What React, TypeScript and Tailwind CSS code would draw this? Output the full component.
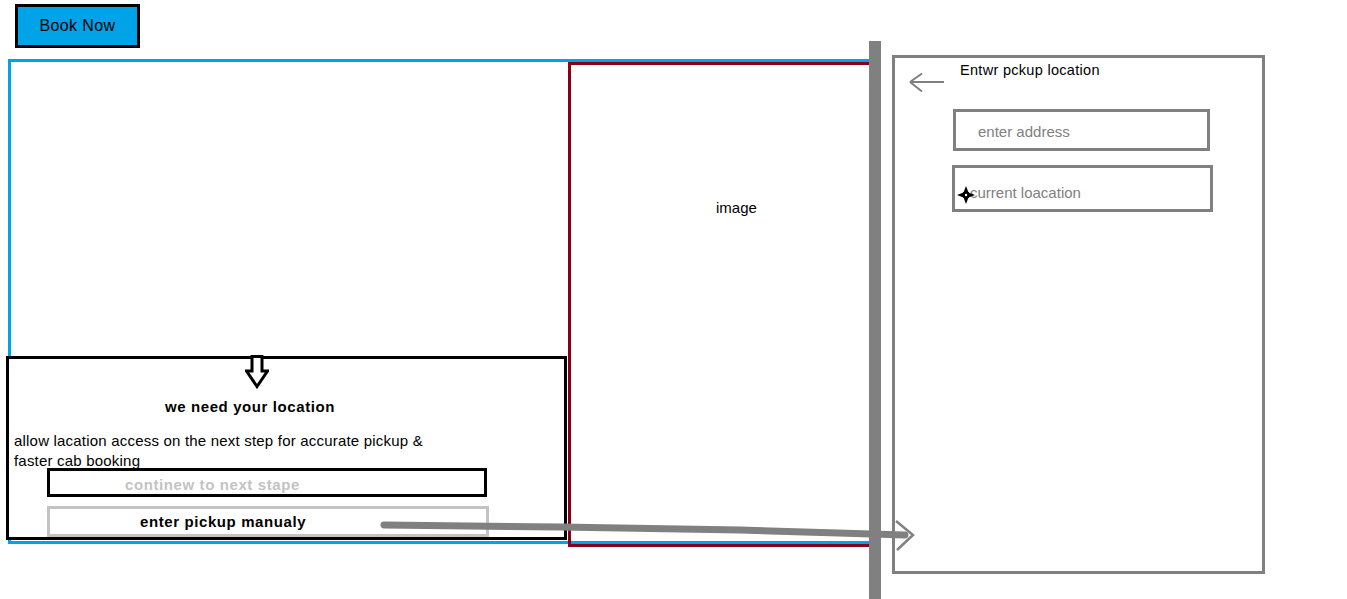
import React from 'react';

const DownArrow = () => (
  <svg width="24" height="34" viewBox="0 0 24 34" className="block">
    <path d="M7 1.5H17V16H22.5L12 31.5L1.5 16H7Z" fill="white" stroke="black" strokeWidth={3} strokeLinejoin="miter" />
  </svg>
);

const BackArrow = () => (
  <svg width="36" height="22" viewBox="0 0 36 22" className="block">
    <path d="M1 10H35M1 10L13 1.5M1 10L13 19.5" fill="none" stroke="#808080" strokeWidth={2} />
  </svg>
);

const Crosshair = () => (
  <svg width="18" height="18" viewBox="0 0 18 18" className="block">
    <path d="M9 0L11.5 6.5L18 9L11.5 11.5L9 18L6.5 11.5L0 9L6.5 6.5Z" fill="black" />
    <rect x="6" y="6" width="6" height="6" fill="black" />
    <circle cx="9" cy="9" r="1.2" fill="white" />
  </svg>
);

const App = () => {
  return (
    <div className="relative flex w-[1347px] h-[599px] overflow-hidden bg-white text-black font-['Liberation_Sans',Arial,sans-serif]">
      {/* left: booking screen */}
      <div className="flex flex-col w-[869px] shrink-0">
        <div className="pl-[15px] pt-[4px]">
          <button className="w-[125px] h-[44px] border-[3px] border-black bg-[#00a2e8] text-[16px] leading-none tracking-[0.4px] text-black">
            Book Now
          </button>
        </div>

        <div className="ml-[8px] mt-[11px] h-[485px] flex border-[3px] border-r-0 border-[#00a2e8]">
          <div className="flex-1 flex flex-col justify-end pb-[1px]">
            {/* location sheet */}
            <div className="-ml-[5px] w-[561px] h-[184px] border-[3px] border-black bg-white">
              <div className="ml-[236px] -mt-[4px] h-[33px]">
                <DownArrow />
              </div>
              <h2 className="mt-[9px] pl-[156px] text-[15px] leading-[20px] font-bold tracking-[0.6px]">
                we need your location
              </h2>
              <p className="mt-[14px] pl-[5px] text-[15px] leading-[20px] tracking-[0.2px]">
                allow lacation access on the next step for accurate pickup &amp;
                <br />
                faster cab booking
              </p>
              <button className="block ml-[38px] -mt-[3px] w-[440px] h-[29px] border-[3px] border-black text-left pl-[75px] pt-[3px] text-[15px] font-bold tracking-[0.6px] text-[#c3c3c3] leading-none">
                continew to next stape
              </button>
              <button className="block ml-[38px] mt-[9px] w-[442px] h-[31px] border-[3px] border-[#c3c3c3] text-left pl-[90px] text-[15px] font-bold tracking-[0.6px] text-black leading-none">
                enter pickup manualy
              </button>
            </div>
          </div>

          <div className="w-[301px] h-[485px] shrink-0 self-start border-[3px] border-r-0 border-[#880015]">
            <p className="pl-[145px] pt-[133px] text-[15px] leading-[20px]">image</p>
          </div>
        </div>
      </div>

      {/* divider */}
      <div className="w-[12px] shrink-0 mt-[41px] bg-[#808080]" />

      {/* right: pickup location screen */}
      <div className="ml-[11px] mt-[55px] w-[373px] h-[519px] shrink-0 border-[3px] border-[#808080]">
        <div className="flex items-start">
          <div className="ml-[14px] mt-[14px]">
            <BackArrow />
          </div>
          <h3 className="ml-[15px] mt-[2px] text-[14.5px] leading-[20px] tracking-[0.3px]">Entwr pckup location</h3>
        </div>
        <div className="ml-[58px] mt-[15px] w-[257px] h-[42px] border-[3px] border-[#808080] flex items-center pl-[22px] pt-[4px] text-[15px] text-[#808080]">
          enter address
        </div>
        <div className="relative ml-[57px] mt-[14px] w-[261px] h-[47px] border-[3px] border-[#808080] flex items-center pl-[15px] pt-[10px] text-[15px] text-[#808080]">
          current loacation
          <div className="absolute left-[2px] top-[18px]">
            <Crosshair />
          </div>
        </div>
      </div>

      {/* flow arrow */}
      <svg className="absolute inset-0 pointer-events-none" width="1347" height="599" viewBox="0 0 1347 599">
        <path d="M384 525L560 527L740 530L905 535" fill="none" stroke="#808080" strokeWidth={7} strokeLinecap="round" strokeLinejoin="round" />
        <path d="M896 521L913 535L897 550" fill="none" stroke="#808080" strokeWidth={2.5} />
      </svg>
    </div>
  );
};

export default App;
